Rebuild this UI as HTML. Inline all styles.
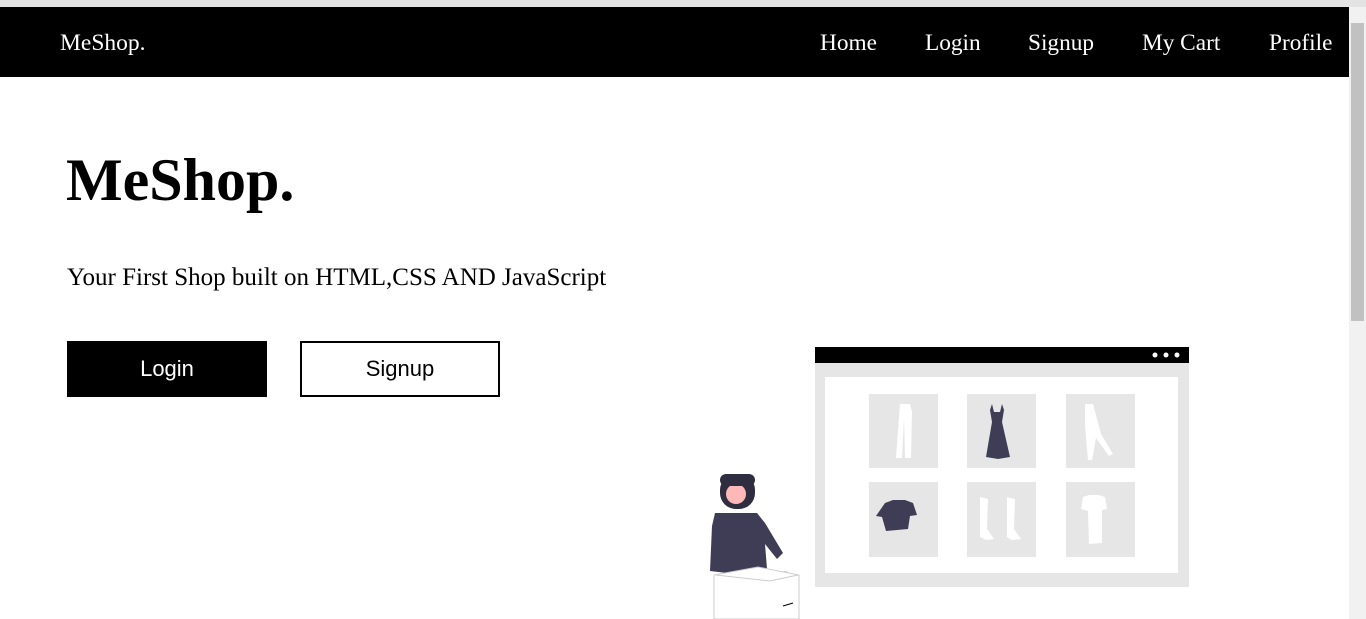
<!DOCTYPE html>
<html><head><style>
body{margin:0;width:1366px;height:619px;overflow:hidden;background:#fff;font-family:"Liberation Serif",serif;position:relative}
.top{position:absolute;left:0;top:0;width:1366px;height:7px;background:#e3e3e3}
nav{position:absolute;left:0;top:7px;width:1349px;height:70px;background:#000;color:#fff;font-size:23.3px}
nav .logo{position:absolute;left:60px;top:23px;font-size:23.5px}
nav .links span{position:absolute;top:23px}
.sb{position:absolute;left:1349px;top:7px;width:17px;height:612px;background:#f1f1f1}
.thumb{position:absolute;left:1351px;top:23px;width:13px;height:298px;background:#c1c1c1}
h1{position:absolute;left:66px;top:145px;margin:0;font-size:60px;font-weight:bold;line-height:70px}
p{position:absolute;left:67px;top:264px;margin:0;font-size:25px}
.btn{position:absolute;top:341px;width:200px;height:56px;box-sizing:border-box;font-family:"Liberation Sans",sans-serif;font-size:22px;text-align:center;line-height:56px}
</style></head><body>
<div class="top"></div>
<nav><span class="logo">MeShop.</span><div class="links">
<span style="left:820px">Home</span><span style="left:925px">Login</span><span style="left:1028px">Signup</span><span style="left:1142px">My Cart</span><span style="left:1269px">Profile</span></div></nav>
<div class="sb"></div><div class="thumb"></div>
<h1>MeShop.</h1>
<p>Your First Shop built on HTML,CSS AND JavaScript</p>
<div class="btn" style="left:67px;background:#000;color:#fff">Login</div>
<div class="btn" style="left:300px;border:2px solid #000;line-height:52px">Signup</div>
<svg style="position:absolute;left:0;top:0" width="1349" height="619">
<rect x="815" y="347" width="374" height="240" fill="#e6e6e6"/>
<rect x="815" y="347" width="374" height="16" fill="#000"/>
<circle cx="1155" cy="355" r="2.5" fill="#fff"/><circle cx="1166" cy="355" r="2.5" fill="#fff"/><circle cx="1177" cy="355" r="2.5" fill="#fff"/>
<rect x="825" y="377" width="353" height="196" fill="#fff"/>
<g fill="#e6e6e6"><rect x="869" y="394" width="69" height="74"/><rect x="967" y="394" width="69" height="74"/><rect x="1066" y="394" width="69" height="74"/>
<rect x="869" y="482" width="69" height="75"/><rect x="967" y="482" width="69" height="75"/><rect x="1066" y="482" width="69" height="75"/></g>
<path d="M900 404h10l2 8-1 46h-6l-1-40-2 40h-6z" fill="#fff"/>
<path d="M992 404l2 8h6l2-8 2 6-2 12 8 35-12 2-12-2 6-35-2-12z" fill="#3f3d56"/>
<path d="M1085 404h8l8 30 12 20-4 2-13-18-4 22h-4l-3-35z" fill="#fff"/>
<path d="M885 503l8-3h12l8 3 4 12-7 1-2 13-22 2-4-14-6-1z" fill="#3f3d56"/>
<path d="M980 497l8 2-1 30 7 10-8 1-6-3z M1007 497l8 2-1 30 7 10-9 1-5-3z" fill="#fff"/>
<path d="M1083 497l6-2h10l6 2 2 12-5 1v33l-13 1-1-33-7-2z" fill="#fff"/>
<rect x="720" y="474" width="35" height="35" rx="16" fill="#2f2e41"/>
<circle cx="736" cy="494" r="10" fill="#ffb8b8"/>
<rect x="720" y="474" width="35" height="12" rx="6" fill="#2f2e41"/>
<path d="M715 513h42l8 10 18 30-6 6-12-15 2 25-40 4-17-2 2-45z" fill="#3f3d56"/>
<circle cx="785" cy="576" r="5" fill="#ffb8b8"/>
<path d="M714 575l44-8 41 8v44h-85z" fill="#fff" stroke="#ccc" stroke-width="1"/>
<path d="M716 575l54 6 28-6" fill="none" stroke="#ccc"/>
<path d="M783 606l10-3" stroke="#000"/>
</svg>
</body></html>
